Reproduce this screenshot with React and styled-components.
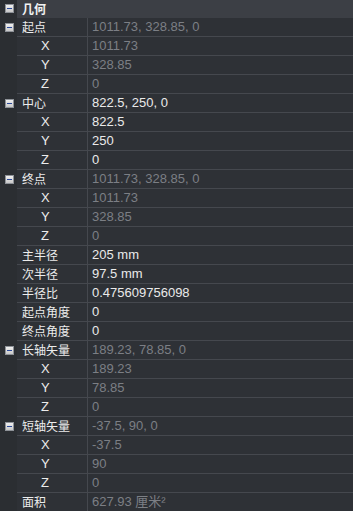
import React from "react";
import styled, { createGlobalStyle } from "styled-components";

const Global = createGlobalStyle`
  html, body { margin: 0; padding: 0; background: #2e3136; }
  body { font-family: "Liberation Sans", "Noto Sans CJK SC", sans-serif; }
`;

const Panel = styled.div`
  width: 353px;
  height: 511px;
  overflow: hidden;
  background: #2e3136;
  display: flex;
  flex-direction: column;
`;

const Header = styled.div`
  display: flex;
  align-items: center;
  height: 18px;
  background: #3c3f45;
  flex-shrink: 0;
`;

const HeaderTitle = styled.div`
  padding-left: 5px;
  font-family: "Noto Sans CJK SC", sans-serif;
  font-weight: 700;
  font-size: 12px;
  color: #f2f2f2;
  line-height: 18px;
`;

const Row = styled.div`
  display: flex;
  height: 19px;
  flex-shrink: 0;
`;

const Gutter = styled.div`
  width: 17px;
  flex-shrink: 0;
  background: #2b2e32;
  display: flex;
  align-items: center;
  justify-content: flex-start;
  padding-left: 5px;
  padding-bottom: 1px;
  box-sizing: border-box;
  height: ${(p) => (p.$header ? "18px" : "19px")};
`;

const Toggle = styled.div`
  width: 9px;
  height: 9px;
  box-sizing: border-box;
  background: linear-gradient(#f0f0f0, #c8c8c8);
  border: 1px solid #8e9298;
  display: flex;
  align-items: center;
  justify-content: center;
  &::after {
    content: "";
    width: 5px;
    height: 1px;
    background: #2c4a9a;
  }
`;

const Label = styled.div`
  width: 71px;
  flex-shrink: 0;
  box-sizing: border-box;
  border-right: 1px solid #45484e;
  border-bottom: 1px solid #45484e;
  padding-left: ${(p) => (p.$sub ? "24px" : "5px")};
  font-family: ${(p) =>
    p.$sub ? `"Liberation Sans", sans-serif` : `"Noto Sans CJK SC", sans-serif`};
  font-size: ${(p) => (p.$sub ? "13px" : "12px")};
  color: #ececec;
  line-height: 18px;
  white-space: nowrap;
`;

const Value = styled.div`
  flex: 1;
  box-sizing: border-box;
  border-bottom: 1px solid #45484e;
  padding-left: 4px;
  font-family: "Liberation Sans", "Noto Sans CJK SC", sans-serif;
  font-size: 13px;
  color: ${(p) => (p.$dim ? "#7c7f85" : "#eaeaea")};
  line-height: 18px;
  white-space: nowrap;
`;

const rows = [
  { label: "起点", value: "1011.73, 328.85, 0", dim: true, toggle: true },
  { label: "X", value: "1011.73", dim: true, sub: true },
  { label: "Y", value: "328.85", dim: true, sub: true },
  { label: "Z", value: "0", dim: true, sub: true },
  { label: "中心", value: "822.5, 250, 0", toggle: true },
  { label: "X", value: "822.5", sub: true },
  { label: "Y", value: "250", sub: true },
  { label: "Z", value: "0", sub: true },
  { label: "终点", value: "1011.73, 328.85, 0", dim: true, toggle: true },
  { label: "X", value: "1011.73", dim: true, sub: true },
  { label: "Y", value: "328.85", dim: true, sub: true },
  { label: "Z", value: "0", dim: true, sub: true },
  { label: "主半径", value: "205 mm" },
  { label: "次半径", value: "97.5 mm" },
  { label: "半径比", value: "0.475609756098" },
  { label: "起点角度", value: "0" },
  { label: "终点角度", value: "0" },
  { label: "长轴矢量", value: "189.23, 78.85, 0", dim: true, toggle: true },
  { label: "X", value: "189.23", dim: true, sub: true },
  { label: "Y", value: "78.85", dim: true, sub: true },
  { label: "Z", value: "0", dim: true, sub: true },
  { label: "短轴矢量", value: "-37.5, 90, 0", dim: true, toggle: true },
  { label: "X", value: "-37.5", dim: true, sub: true },
  { label: "Y", value: "90", dim: true, sub: true },
  { label: "Z", value: "0", dim: true, sub: true },
  { label: "面积", value: "627.93 厘米²", dim: true },
];

export default function App() {
  return (
    <>
      <Global />
      <Panel>
        <Header>
          <Gutter $header>
            <Toggle />
          </Gutter>
          <HeaderTitle>几何</HeaderTitle>
        </Header>
        {rows.map((r, i) => (
          <Row key={i}>
            <Gutter>{r.toggle && <Toggle />}</Gutter>
            <Label $sub={r.sub}>{r.label}</Label>
            <Value $dim={r.dim}>{r.value}</Value>
          </Row>
        ))}
      </Panel>
    </>
  );
}
